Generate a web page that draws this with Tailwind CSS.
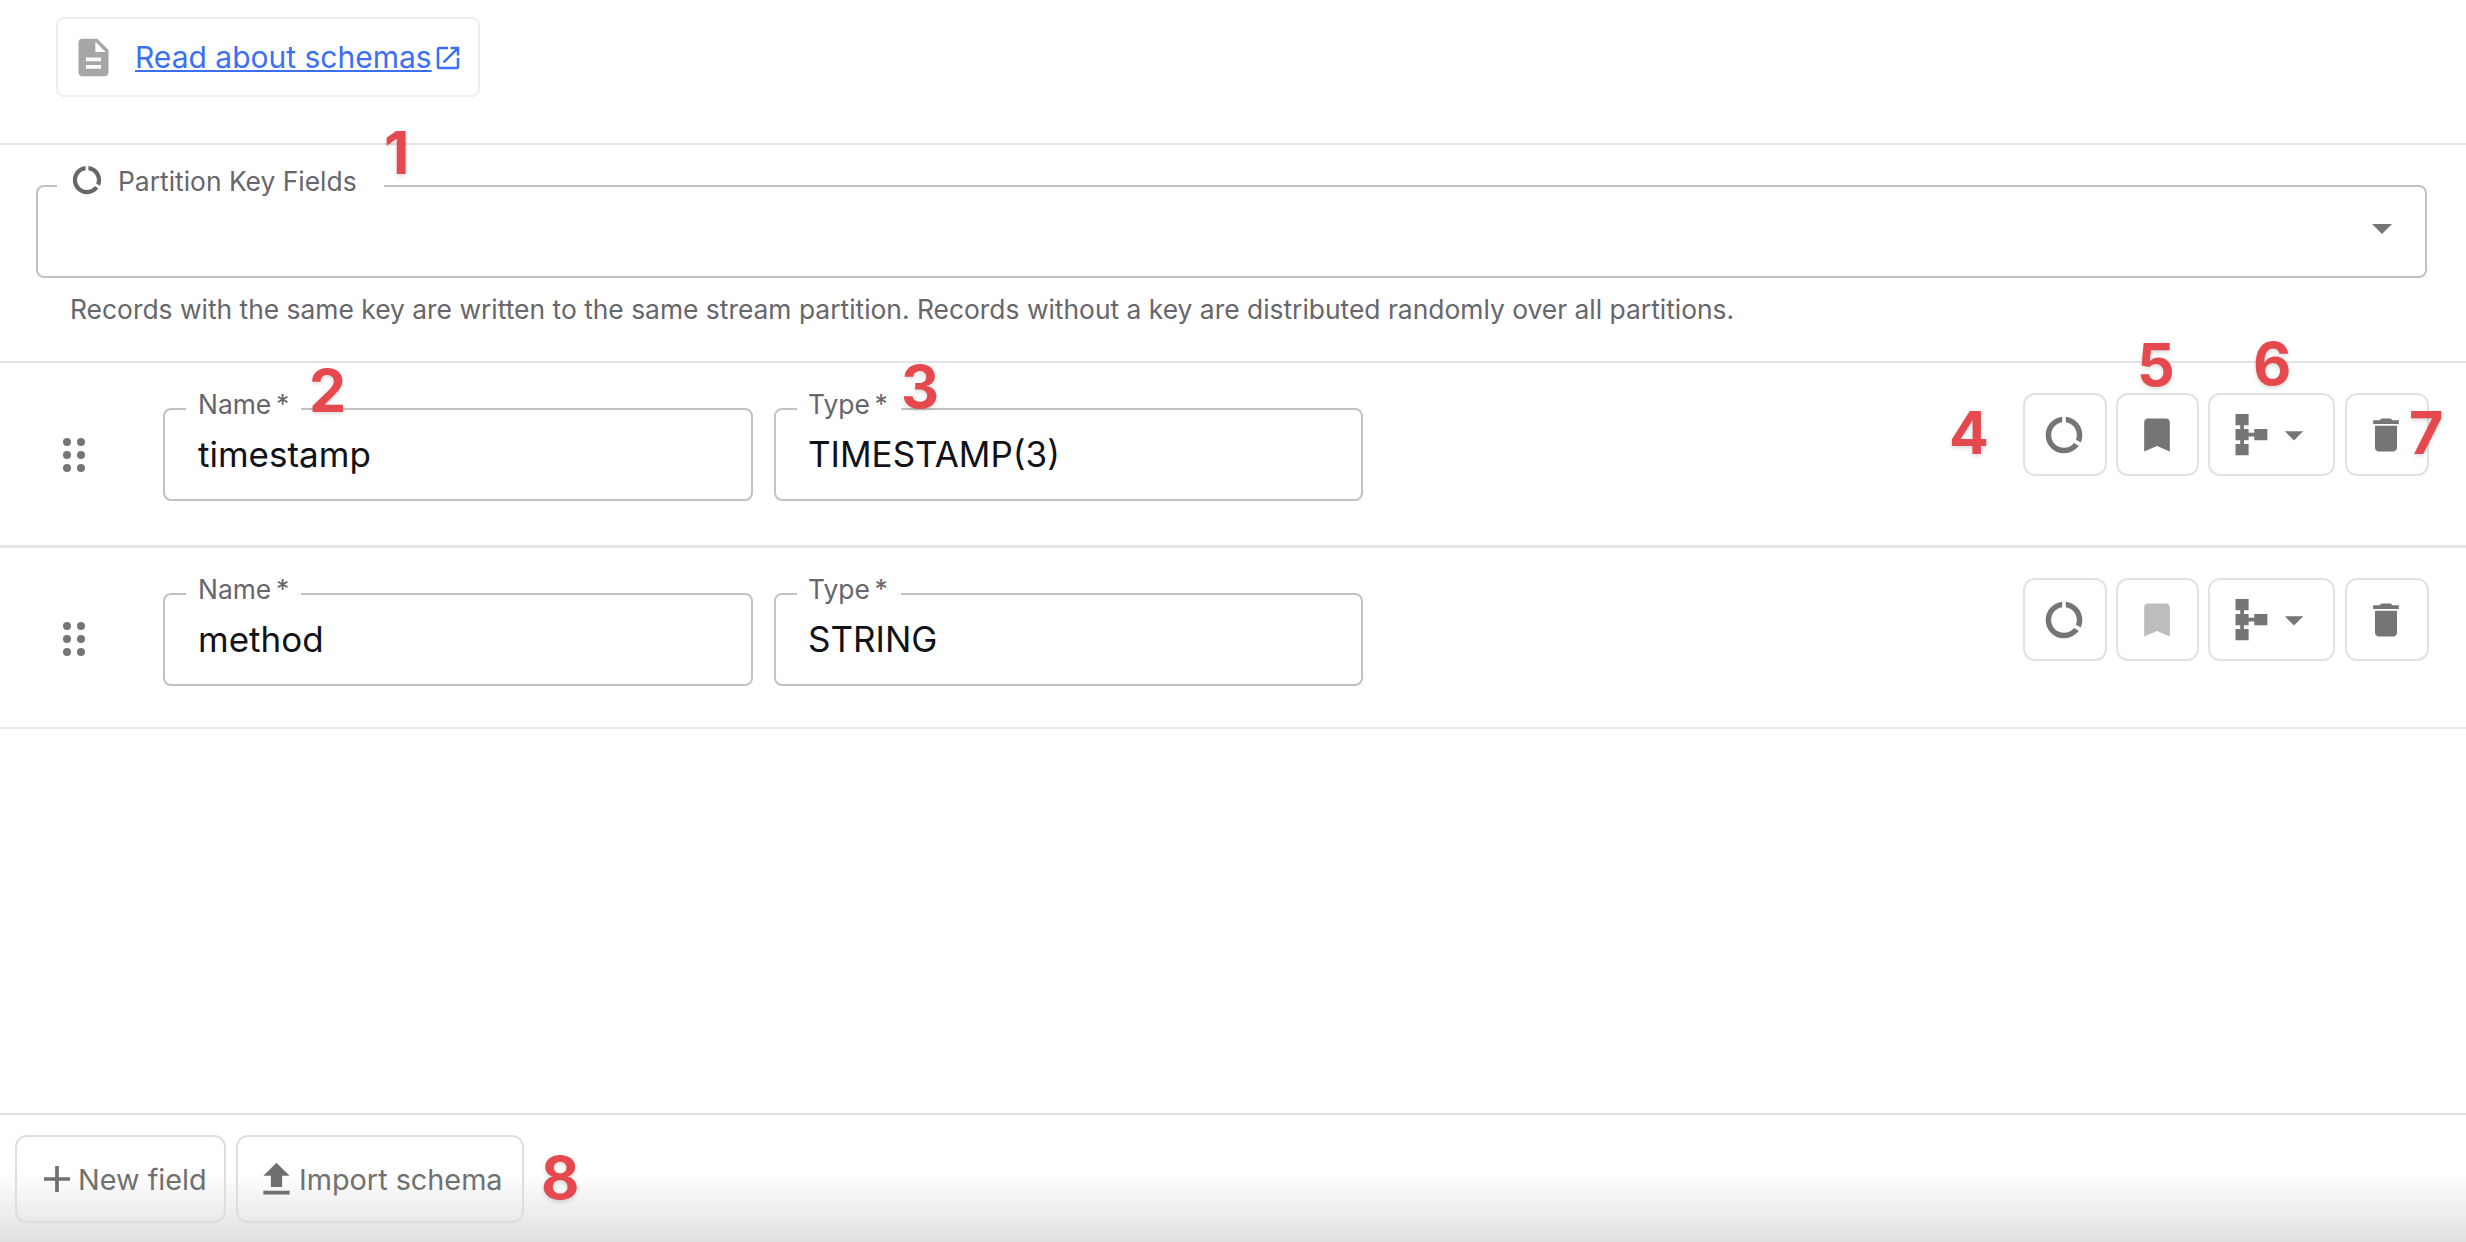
<!DOCTYPE html>
<html lang="en">
<head>
<meta charset="UTF-8">
<title>Schema editor</title>
<script src="https://cdn.jsdelivr.net/npm/@tailwindcss/browser@4"></script>
</head>
<body class="bg-white font-['Inter',sans-serif]">
<div class="relative w-[2466px] h-[1242px] overflow-hidden flex flex-col">

  <!-- docs link -->
  <div class="h-[145px] pt-[17px] pl-[56px] border-b-2 border-[#e4e4e4]">
    <div class="w-[424px] h-[80px] border-2 border-[#eeeeee] rounded-[8px] flex items-center pl-[13px]">
      <svg class="w-[45px] h-[45px] text-[#a6a6a6]" viewBox="0 0 24 24" fill="currentColor"><path d="M14 2H6c-1.1 0-1.99.9-1.99 2L4 20c0 1.1.89 2 1.99 2H18c1.1 0 2-.9 2-2V8l-6-6zm2 16H8v-2h8v2zm0-4H8v-2h8v2zm-3-5V3.5L18.5 9H13z"/></svg>
      <a class="ml-[19px] text-[30px] leading-none text-[#3b6ff5] underline decoration-2 underline-offset-2">Read about schemas</a>
      <svg class="w-[30px] h-[30px] mt-[2px] ml-[1px] text-[#3b6ff5]" viewBox="0 0 24 24" fill="currentColor"><path d="M19 19H5V5h7V3H5c-1.11 0-2 .9-2 2v14c0 1.1.89 2 2 2h14c1.1 0 2-.9 2-2v-7h-2v7zM14 3v2h3.59l-9.83 9.83 1.41 1.41L19 6.41V10h2V3h-7z"/></svg>
    </div>
  </div>

  <!-- partition key -->
  <div class="h-[218px] pt-[40px] pl-[36px] pr-[39px] border-b-2 border-[#e4e4e4]">
    <div class="relative h-[93px] border-2 border-[#c2c2c2] rounded-[8px] flex items-center justify-end pr-[19px]">
      <div class="absolute left-[19px] -top-[2px] h-[4px] w-[327px] bg-white"></div>
      <div class="absolute left-[19px] -top-[27px] h-[44px] flex items-center px-[13px] gap-[14px] text-[26.4px] text-[#66666b]">
        <svg class="w-[34px] h-[34px] -mt-[5px]" viewBox="0 0 24 24" fill="currentColor"><path d="M13 2.05v3.03c3.39.49 6 3.39 6 6.92 0 .9-.18 1.75-.48 2.54l2.6 1.53c.56-1.24.88-2.62.88-4.07 0-5.18-3.95-9.45-9-9.95zM12 19c-3.87 0-7-3.13-7-7 0-3.53 2.61-6.43 6-6.92V2.05c-5.06.5-9 4.76-9 9.95 0 5.52 4.47 10 9.99 10 3.31 0 6.24-1.61 8.06-4.09l-2.6-1.53C16.17 17.98 14.21 19 12 19z"/></svg>
        <span>Partition Key Fields</span>
      </div>
      <svg class="w-[48px] h-[48px] mb-[8px] text-[#757575]" viewBox="0 0 24 24" fill="currentColor"><path d="M7 10l5 5 5-5z"/></svg>
    </div>
    <p class="mt-[15px] ml-[34px] text-[26.4px] leading-[32px] text-[#66666b]">Records with the same key are written to the same stream partition. Records without a key are distributed randomly over all partitions.</p>
  </div>

  <!-- field 1 -->
  <div class="h-[185px] pl-[63px] pr-[37px] flex border-b-[3px] border-[#e4e4e4]">
    <svg class="mt-[74px] w-[22px] h-[36px] text-[#757575] mr-[78px]" viewBox="0 0 22 36" fill="currentColor"><circle cx="4" cy="5" r="4"/><circle cx="18" cy="5" r="4"/><circle cx="4" cy="18" r="4"/><circle cx="18" cy="18" r="4"/><circle cx="4" cy="31" r="4"/><circle cx="18" cy="31" r="4"/></svg>
    <div class="mt-[45px] flex gap-[21px]">
      <div class="relative w-[590px] h-[93px] border-2 border-[#c2c2c2] rounded-[8px] flex items-center pl-[33px] text-[35px] text-[#111118]">
        <span class="absolute left-[21px] -top-[2px] h-[4px] w-[115px] bg-white"></span>
        <span class="absolute left-[33px] -top-[27px] h-[44px] flex items-center text-[26.4px] text-[#66666b] whitespace-pre">Name&thinsp;*</span>
        timestamp
      </div>
      <div class="relative w-[589px] h-[93px] border-2 border-[#c2c2c2] rounded-[8px] flex items-center pl-[32px] text-[35px] text-[#111118]">
        <span class="absolute left-[21px] -top-[2px] h-[4px] w-[104px] bg-white"></span>
        <span class="absolute left-[32px] -top-[27px] h-[44px] flex items-center text-[26.4px] text-[#66666b] whitespace-pre">Type&thinsp;*</span>
        TIMESTAMP(3)
      </div>
    </div>
    <div class="ml-auto mt-[30px] flex gap-[9px] h-[83px]">
      <div class="w-[84px] pr-[2px] border-2 border-[#e2e2e2] rounded-[12px] flex items-center justify-center text-[#757575]">
        <svg class="w-[44px] h-[44px]" viewBox="0 0 24 24" fill="currentColor"><path d="M13 2.05v3.03c3.39.49 6 3.39 6 6.92 0 .9-.18 1.75-.48 2.54l2.6 1.53c.56-1.24.88-2.62.88-4.07 0-5.18-3.95-9.45-9-9.95zM12 19c-3.87 0-7-3.13-7-7 0-3.53 2.61-6.43 6-6.92V2.05c-5.06.5-9 4.76-9 9.95 0 5.52 4.47 10 9.99 10 3.31 0 6.24-1.61 8.06-4.09l-2.6-1.53C16.17 17.98 14.21 19 12 19z"/></svg>
      </div>
      <div class="w-[83px] pr-[2px] border-2 border-[#e2e2e2] rounded-[12px] flex items-center justify-center text-[#757575]">
        <svg class="w-[44px] h-[44px]" viewBox="0 0 24 24" fill="currentColor"><path d="M17 3H7c-1.1 0-1.99.9-1.99 2L5 21l7-3 7 3V5c0-1.1-.9-2-2-2z"/></svg>
      </div>
      <div class="w-[127px] border-2 border-[#e2e2e2] rounded-[12px] flex items-center pl-[18px] text-[#757575]">
        <svg class="w-[45px] h-[45px]" viewBox="0 0 24 24" fill="currentColor"><path d="M14 9v2h-3V9H8.5V7H11V1H4v6h2.5v2H4v6h2.5v2H4v6h7v-6H8.5v-2H11v-2h3v2h7V9h-7z"/></svg>
        <svg class="w-[44px] h-[44px] -ml-[1px]" viewBox="0 0 24 24" fill="currentColor"><path d="M7 10l5 5 5-5z"/></svg>
      </div>
      <div class="w-[84px] ml-px pr-[2px] border-2 border-[#e2e2e2] rounded-[12px] flex items-center justify-center text-[#757575]">
        <svg class="w-[44px] h-[44px]" viewBox="0 0 24 24" fill="currentColor"><path d="M6 19c0 1.1.9 2 2 2h8c1.1 0 2-.9 2-2V7H6v12zM19 4h-3.5l-1-1h-5l-1 1H5v2h14V4z"/></svg>
      </div>
    </div>
  </div>

  <!-- field 2 -->
  <div class="h-[181px] pl-[63px] pr-[37px] flex border-b-2 border-[#ececec]">
    <svg class="mt-[73px] w-[22px] h-[36px] text-[#757575] mr-[78px]" viewBox="0 0 22 36" fill="currentColor"><circle cx="4" cy="5" r="4"/><circle cx="18" cy="5" r="4"/><circle cx="4" cy="18" r="4"/><circle cx="18" cy="18" r="4"/><circle cx="4" cy="31" r="4"/><circle cx="18" cy="31" r="4"/></svg>
    <div class="mt-[45px] flex gap-[21px]">
      <div class="relative w-[590px] h-[93px] border-2 border-[#c2c2c2] rounded-[8px] flex items-center pl-[33px] text-[35px] text-[#111118]">
        <span class="absolute left-[21px] -top-[2px] h-[4px] w-[115px] bg-white"></span>
        <span class="absolute left-[33px] -top-[27px] h-[44px] flex items-center text-[26.4px] text-[#66666b] whitespace-pre">Name&thinsp;*</span>
        method
      </div>
      <div class="relative w-[589px] h-[93px] border-2 border-[#c2c2c2] rounded-[8px] flex items-center pl-[32px] text-[35px] text-[#111118]">
        <span class="absolute left-[21px] -top-[2px] h-[4px] w-[104px] bg-white"></span>
        <span class="absolute left-[32px] -top-[27px] h-[44px] flex items-center text-[26.4px] text-[#66666b] whitespace-pre">Type&thinsp;*</span>
        STRING
      </div>
    </div>
    <div class="ml-auto mt-[30px] flex gap-[9px] h-[83px]">
      <div class="w-[84px] pr-[2px] border-2 border-[#e2e2e2] rounded-[12px] flex items-center justify-center text-[#757575]">
        <svg class="w-[44px] h-[44px]" viewBox="0 0 24 24" fill="currentColor"><path d="M13 2.05v3.03c3.39.49 6 3.39 6 6.92 0 .9-.18 1.75-.48 2.54l2.6 1.53c.56-1.24.88-2.62.88-4.07 0-5.18-3.95-9.45-9-9.95zM12 19c-3.87 0-7-3.13-7-7 0-3.53 2.61-6.43 6-6.92V2.05c-5.06.5-9 4.76-9 9.95 0 5.52 4.47 10 9.99 10 3.31 0 6.24-1.61 8.06-4.09l-2.6-1.53C16.17 17.98 14.21 19 12 19z"/></svg>
      </div>
      <div class="w-[83px] pr-[2px] border-2 border-[#e2e2e2] rounded-[12px] flex items-center justify-center text-[#bdbdbd]">
        <svg class="w-[44px] h-[44px]" viewBox="0 0 24 24" fill="currentColor"><path d="M17 3H7c-1.1 0-1.99.9-1.99 2L5 21l7-3 7 3V5c0-1.1-.9-2-2-2z"/></svg>
      </div>
      <div class="w-[127px] border-2 border-[#e2e2e2] rounded-[12px] flex items-center pl-[18px] text-[#757575]">
        <svg class="w-[45px] h-[45px]" viewBox="0 0 24 24" fill="currentColor"><path d="M14 9v2h-3V9H8.5V7H11V1H4v6h2.5v2H4v6h2.5v2H4v6h7v-6H8.5v-2H11v-2h3v2h7V9h-7z"/></svg>
        <svg class="w-[44px] h-[44px] -ml-[1px]" viewBox="0 0 24 24" fill="currentColor"><path d="M7 10l5 5 5-5z"/></svg>
      </div>
      <div class="w-[84px] ml-px pr-[2px] border-2 border-[#e2e2e2] rounded-[12px] flex items-center justify-center text-[#757575]">
        <svg class="w-[44px] h-[44px]" viewBox="0 0 24 24" fill="currentColor"><path d="M6 19c0 1.1.9 2 2 2h8c1.1 0 2-.9 2-2V7H6v12zM19 4h-3.5l-1-1h-5l-1 1H5v2h14V4z"/></svg>
      </div>
    </div>
  </div>

  <div class="flex-1"></div>

  <!-- footer -->
  <div class="h-[129px] border-t-2 border-[#e2e2e2] pl-[15px] pt-[20px] flex gap-[10px] bg-gradient-to-b from-white from-45% to-[#e0e0e0]">
    <div class="w-[211px] h-[88px] border-2 border-[#dedede] rounded-[12px] flex items-center pl-[27px] text-[28.8px] text-[#707070]">
      <svg class="w-[26px] h-[26px]" viewBox="5 5 14 14" fill="currentColor"><path d="M19 13h-6v6h-2v-6H5v-2h6V5h2v6h6v2z"/></svg>
      <span class="ml-[8px] mt-[2px]">New field</span>
    </div>
    <div class="w-[288px] h-[88px] border-2 border-[#dedede] rounded-[12px] flex items-center pl-[16px] text-[28.8px] text-[#707070]">
      <svg class="w-[45px] h-[45px]" viewBox="0 0 24 24" fill="currentColor"><path d="M9 16h6v-6h4l-7-7-7 7h4zm-4 2h14v2H5z"/></svg>
      <span class="mt-[2px]">Import schema</span>
    </div>
  </div>

  <!-- annotation numbers -->
  <span class="absolute left-[384px] top-[118px] text-[59px] leading-[70px] font-[750] text-[#e5484d] [text-shadow:0_2px_4px_rgba(0,0,0,0.15)]">1</span>
  <span class="absolute left-[309px] top-[356px] text-[59px] leading-[70px] font-[750] text-[#e5484d] [text-shadow:0_2px_4px_rgba(0,0,0,0.15)]">2</span>
  <span class="absolute left-[901px] top-[352px] text-[59px] leading-[70px] font-[750] text-[#e5484d] [text-shadow:0_2px_4px_rgba(0,0,0,0.15)]">3</span>
  <span class="absolute left-[1949px] top-[398px] text-[59px] leading-[70px] font-[750] text-[#e5484d] [text-shadow:0_2px_4px_rgba(0,0,0,0.15)]">4</span>
  <span class="absolute left-[2137px] top-[330px] text-[59px] leading-[70px] font-[750] text-[#e5484d] [text-shadow:0_2px_4px_rgba(0,0,0,0.15)]">5</span>
  <span class="absolute left-[2253px] top-[329px] text-[59px] leading-[70px] font-[750] text-[#e5484d] [text-shadow:0_2px_4px_rgba(0,0,0,0.15)]">6</span>
  <span class="absolute left-[2409px] top-[398px] text-[59px] leading-[70px] font-[750] text-[#e5484d] [text-shadow:0_2px_4px_rgba(0,0,0,0.15)]">7</span>
  <span class="absolute left-[541px] top-[1143px] text-[59px] leading-[70px] font-[750] text-[#e5484d] [text-shadow:0_2px_4px_rgba(0,0,0,0.15)]">8</span>
</div>
</body>
</html>
